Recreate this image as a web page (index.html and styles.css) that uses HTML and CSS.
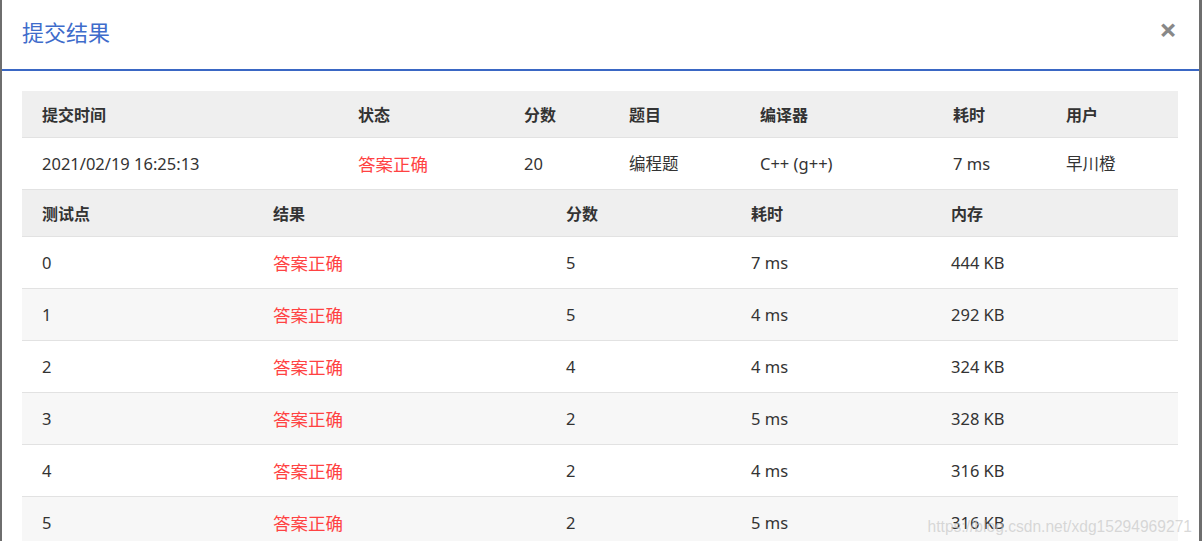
FILE: index.html
```html
<!DOCTYPE html>
<html>
<head>
  <title>提交结果</title>
  <link rel="stylesheet" href="styles.css">
</head>
<body>
  <div class="modal">
    <div class="modal-header">
      <h2 class="modal-title">提交结果</h2>
      <span class="close-button">&times;</span>
    </div>

    <div class="modal-body">
      <table class="result-table">
        <colgroup>
          <col style="width: 316px">
          <col style="width: 166px">
          <col style="width: 105px">
          <col style="width: 131px">
          <col style="width: 193px">
          <col style="width: 113px">
          <col>
        </colgroup>
        <thead>
          <tr>
            <th>提交时间</th>
            <th>状态</th>
            <th>分数</th>
            <th>题目</th>
            <th>编译器</th>
            <th>耗时</th>
            <th>用户</th>
          </tr>
        </thead>
        <tbody>
          <tr>
            <td>2021/02/19 16:25:13</td>
            <td class="status">答案正确</td>
            <td>20</td>
            <td>编程题</td>
            <td>C++ (g++)</td>
            <td>7 ms</td>
            <td>早川橙</td>
          </tr>
        </tbody>
      </table>

      <table class="result-table cases">
        <colgroup>
          <col style="width: 231px">
          <col style="width: 293px">
          <col style="width: 185px">
          <col style="width: 200px">
          <col>
        </colgroup>
        <thead>
          <tr>
            <th>测试点</th>
            <th>结果</th>
            <th>分数</th>
            <th>耗时</th>
            <th>内存</th>
          </tr>
        </thead>
        <tbody>
          <tr><td>0</td><td class="status">答案正确</td><td>5</td><td>7 ms</td><td>444 KB</td></tr>
          <tr><td>1</td><td class="status">答案正确</td><td>5</td><td>4 ms</td><td>292 KB</td></tr>
          <tr><td>2</td><td class="status">答案正确</td><td>4</td><td>4 ms</td><td>324 KB</td></tr>
          <tr><td>3</td><td class="status">答案正确</td><td>2</td><td>5 ms</td><td>328 KB</td></tr>
          <tr><td>4</td><td class="status">答案正确</td><td>2</td><td>4 ms</td><td>316 KB</td></tr>
          <tr><td>5</td><td class="status">答案正确</td><td>2</td><td>5 ms</td><td>316 KB</td></tr>
        </tbody>
      </table>
    </div>

    <div class="watermark">https://blog.csdn.net/xdg15294969271</div>
  </div>
</body>
</html>
```

FILE: styles.css
```css
/* page behind the dialog */
html, body {
  height: 100%;
}

body {
  margin: 0;
  background-color: #6e6e6e;
  font-family: "Noto Sans", "Noto Sans CJK SC", sans-serif;
  color: #333;
  overflow: hidden;
}

/* dialog */
.modal {
  position: relative;
  margin: 0 3px 0 2px;
  height: 100%;
  background-color: #fff;
}

.modal-header {
  display: flex;
  align-items: center;
  justify-content: space-between;
  height: 61px;
  padding: 0 22px 8px 20px;
  border-bottom: 2px solid #3a67c4;
}

.modal-title {
  margin: 0;
  font-size: 22px;
  line-height: 26px;
  font-weight: normal;
  color: #3e6ccb;
  font-family: "Noto Sans CJK SC", sans-serif;
}

.close-button {
  color: #888;
  font-size: 31px;
  font-weight: bold;
  line-height: 1;
  margin-top: -2px;
  cursor: pointer;
}

.modal-body {
  padding: 20px 21px 0 20px;
}

/* tables */
.result-table {
  width: 100%;
  border-collapse: collapse;
  table-layout: fixed;
  font-size: 16.5px;
}

.result-table th,
.result-table td {
  padding: 0 0 1px 20px;
  text-align: left;
  white-space: nowrap;
}

.result-table th {
  height: 45px;
  background-color: #efefef;
  font-size: 16px;
  font-weight: bold;
  font-family: "Noto Sans CJK SC", sans-serif;
}

.result-table td {
  height: 50px;
  border-top: 1px solid #e2e2e2;
}

.cases th {
  border-top: 1px solid #e2e2e2;
}

.cases tbody tr:nth-child(even) td {
  background-color: #f7f7f7;
}

.status {
  color: #ff4242;
  font-size: 17.5px;
  font-family: "Noto Sans CJK SC", sans-serif;
}

/* blog watermark over the last row */
.watermark {
  position: absolute;
  right: 7px;
  bottom: 5px;
  font-family: "Liberation Sans", sans-serif;
  font-size: 15.6px;
  color: rgba(200, 200, 200, 0.7);
  pointer-events: none;
}
```
